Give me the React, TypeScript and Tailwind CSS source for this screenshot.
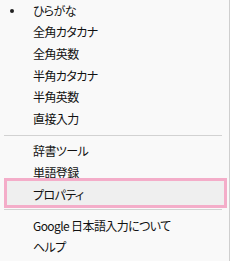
import React from "react";

const font = "font-['Meiryo_UI','Noto_Sans_CJK_JP',sans-serif] [font-feature-settings:'palt'] text-[12px] leading-none tracking-[-0.6px] text-[#111]";

function Row({ label, h = "h-[21.6px]", bullet = false }: { label: string; h?: string; bullet?: boolean }) {
  return (
    <div className={`flex items-center ${h}`}>
      <div className="w-[33px] shrink-0 pl-[10px] flex items-center">
        {bullet && <span className="block w-[4px] h-[4px] rounded-full bg-[#222]" />}
      </div>
      <span className="whitespace-nowrap">{label}</span>
    </div>
  );
}

function Sep({ h, top }: { h: string; top: string }) {
  return (
    <div className={`${h} ${top}`}>
      <div className="ml-[4px] w-[218px] h-px bg-[#d2d2d2]" />
    </div>
  );
}

export default function App() {
  return (
    <div className="w-[231px] h-[261px] bg-white overflow-hidden">
      <div className={`w-[230px] h-[261px] bg-[#f9f9f9] border-r border-[#cfcfcf] ${font}`}>
        <Row label="ひらがな" bullet />
        <Row label="全角カタカナ" />
        <Row label="全角英数" />
        <Row label="半角カタカナ" />
        <Row label="半角英数" />
        <Row label="直接入力" />
        <Sep h="h-[11.1px]" top="pt-[5px]" />
        <Row label="辞書ツール" />
        <Row label="単語登録" />
        <div className="relative">
          <div className="absolute left-[4px] right-[2px] top-[-6px] bottom-[-2.5px] border-[3px] border-[#f4adc9] bg-[#efefef]" />
          <div className="relative">
            <Row label="プロパティ" />
          </div>
        </div>
        <Sep h="h-[9.4px]" top="pt-[3.5px]" />
        <Row label="Google 日本語入力について" />
        <Row label="ヘルプ" />
      </div>
    </div>
  );
}
